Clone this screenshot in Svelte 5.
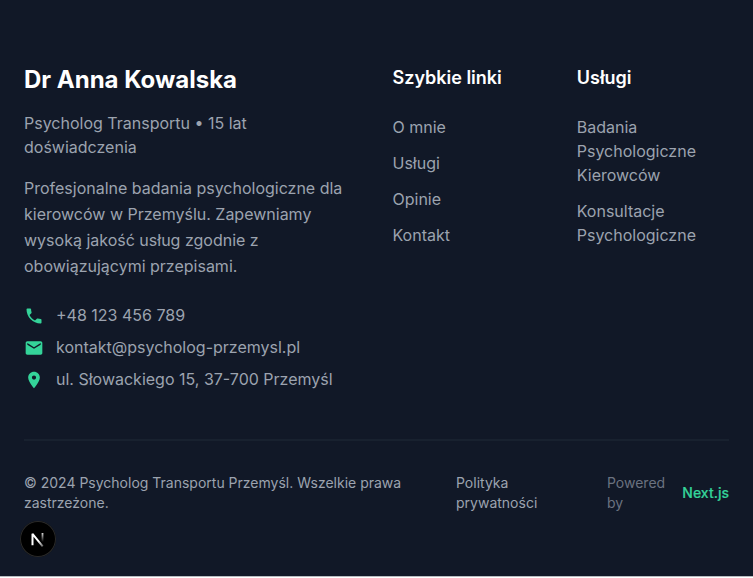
<script>
  const links = ['O mnie', 'Usługi', 'Opinie', 'Kontakt'];
  const services = ['Badania Psychologiczne Kierowców', 'Konsultacje Psychologiczne'];
  const contacts = [
    {
      text: '+48 123 456 789',
      path: 'M6.62 10.79c1.44 2.83 3.76 5.14 6.59 6.59l2.2-2.2c.27-.27.67-.36 1.02-.24 1.12.37 2.33.57 3.57.57.55 0 1 .45 1 1V20c0 .55-.45 1-1 1-9.39 0-17-7.61-17-17 0-.55.45-1 1-1h3.5c.55 0 1 .45 1 1 0 1.25.2 2.45.57 3.57.11.35.03.74-.25 1.02l-2.2 2.2z'
    },
    {
      text: 'kontakt@psycholog-przemysl.pl',
      path: 'M20 4H4c-1.1 0-1.99.9-1.99 2L2 18c0 1.1.9 2 2 2h16c1.1 0 2-.9 2-2V6c0-1.1-.9-2-2-2zm0 4l-8 5-8-5V6l8 5 8-5v2z'
    },
    {
      text: 'ul. Słowackiego 15, 37-700 Przemyśl',
      path: 'M12 2C8.13 2 5 5.13 5 9c0 5.25 7 13 7 13s7-7.75 7-13c0-3.87-3.13-7-7-7zm0 9.5c-1.38 0-2.5-1.12-2.5-2.5s1.12-2.5 2.5-2.5 2.5 1.12 2.5 2.5-1.12 2.5-2.5 2.5z'
    }
  ];
</script>

<footer>
  <div class="columns">
    <section class="about">
      <h3>Dr Anna Kowalska</h3>
      <p class="role">Psycholog Transportu • 15 lat doświadczenia</p>
      <p class="intro">
        Profesjonalne badania psychologiczne dla kierowców w Przemyślu. Zapewniamy wysoką jakość usług zgodnie z
        obowiązującymi przepisami.
      </p>
      <div class="contacts">
        {#each contacts as c}
          <div class="contact">
            <svg viewBox="0 0 24 24" width="20" height="20"><path d={c.path} /></svg>
            <span>{c.text}</span>
          </div>
        {/each}
      </div>
    </section>
    <section>
      <h4>Szybkie linki</h4>
      <ul>
        {#each links as l}<li>{l}</li>{/each}
      </ul>
    </section>
    <section>
      <h4>Usługi</h4>
      <ul>
        {#each services as s}<li>{s}</li>{/each}
      </ul>
    </section>
  </div>
  <div class="bottom">
    <p class="copyright">© 2024 Psycholog Transportu Przemyśl. Wszelkie prawa zastrzeżone.</p>
    <div class="legal">
      <span class="privacy">Polityka prywatności</span>
      <div class="powered"><span class="by">Powered by</span><span class="next">Next.js</span></div>
    </div>
  </div>
</footer>

<div class="badge">
  <svg width="36" height="36" viewBox="0 0 36 36" fill="none">
    <defs>
      <linearGradient id="diag" x1="20" y1="19" x2="24" y2="25" gradientUnits="userSpaceOnUse">
        <stop stop-color="#fff" /><stop offset="1" stop-color="#fff" stop-opacity="0.35" />
      </linearGradient>
      <linearGradient id="stem" x1="22.5" y1="12" x2="22.5" y2="21" gradientUnits="userSpaceOnUse">
        <stop stop-color="#fff" stop-opacity="0.85" /><stop offset="1" stop-color="#fff" stop-opacity="0" />
      </linearGradient>
    </defs>
    <path d="M12.5 24.2V12.8L22.7 25.3" stroke="url(#diag)" stroke-width="2" stroke-linejoin="bevel" />
    <path d="M22.5 12v9" stroke="url(#stem)" stroke-width="1.8" />
  </svg>
</div>

<style>
  :global(body) {
    margin: 0;
    background: #fff;
    overflow: hidden;
  }
  footer {
    box-sizing: border-box;
    height: 577px;
    padding: 64px 24px 0;
    border-bottom: 1px solid #b9bbbf;
    background: #111827;
    color: #9ca3af;
    font: 16px/24px Inter, sans-serif;
  }
  h3,
  h4,
  p,
  ul {
    margin: 0;
    padding: 0;
  }
  .columns {
    display: grid;
    grid-template-columns: repeat(4, minmax(0, 1fr));
    gap: 32px;
  }
  .about {
    grid-column: span 2;
  }
  h3 {
    font-size: 24px;
    line-height: 32px;
    font-weight: 700;
    color: #fff;
    margin-bottom: 15px;
  }
  .role {
    margin-bottom: 16px;
  }
  .intro {
    line-height: 26px;
    margin-bottom: 24px;
  }
  .contacts {
    display: flex;
    flex-direction: column;
    gap: 8px;
  }
  .contact {
    display: flex;
    align-items: center;
    gap: 12px;
  }
  .contact svg {
    fill: #34d399;
    margin-top: 1px;
  }
  h4 {
    font-size: 18px;
    line-height: 28px;
    font-weight: 600;
    color: #fff;
    margin-bottom: 23px;
  }
  ul {
    list-style: none;
    display: flex;
    flex-direction: column;
    gap: 12px;
  }
  .bottom {
    margin-top: 48px;
    border-top: 2px solid #18212f;
    padding-top: 32px;
    display: flex;
    justify-content: space-between;
    align-items: center;
    font-size: 14px;
    line-height: 20px;
  }
  .copyright {
    width: 400px;
  }
  .legal {
    display: flex;
    justify-content: space-between;
    align-items: center;
    width: 273px;
  }
  .privacy {
    width: 90px;
  }
  .powered {
    display: flex;
    justify-content: space-between;
    align-items: center;
    width: 122px;
  }
  .by {
    width: 62px;
    color: #6b7280;
  }
  .next {
    color: #34d399;
    font-weight: 500;
    -webkit-text-stroke: 0.2px #34d399;
  }
  .badge {
    position: absolute;
    left: 20px;
    top: 521px;
    width: 36px;
    height: 36px;
    border-radius: 50%;
    background: #000;
    box-shadow: inset 0 0 0 1px #2a2a2a;
  }
  .badge svg {
    display: block;
  }
</style>
